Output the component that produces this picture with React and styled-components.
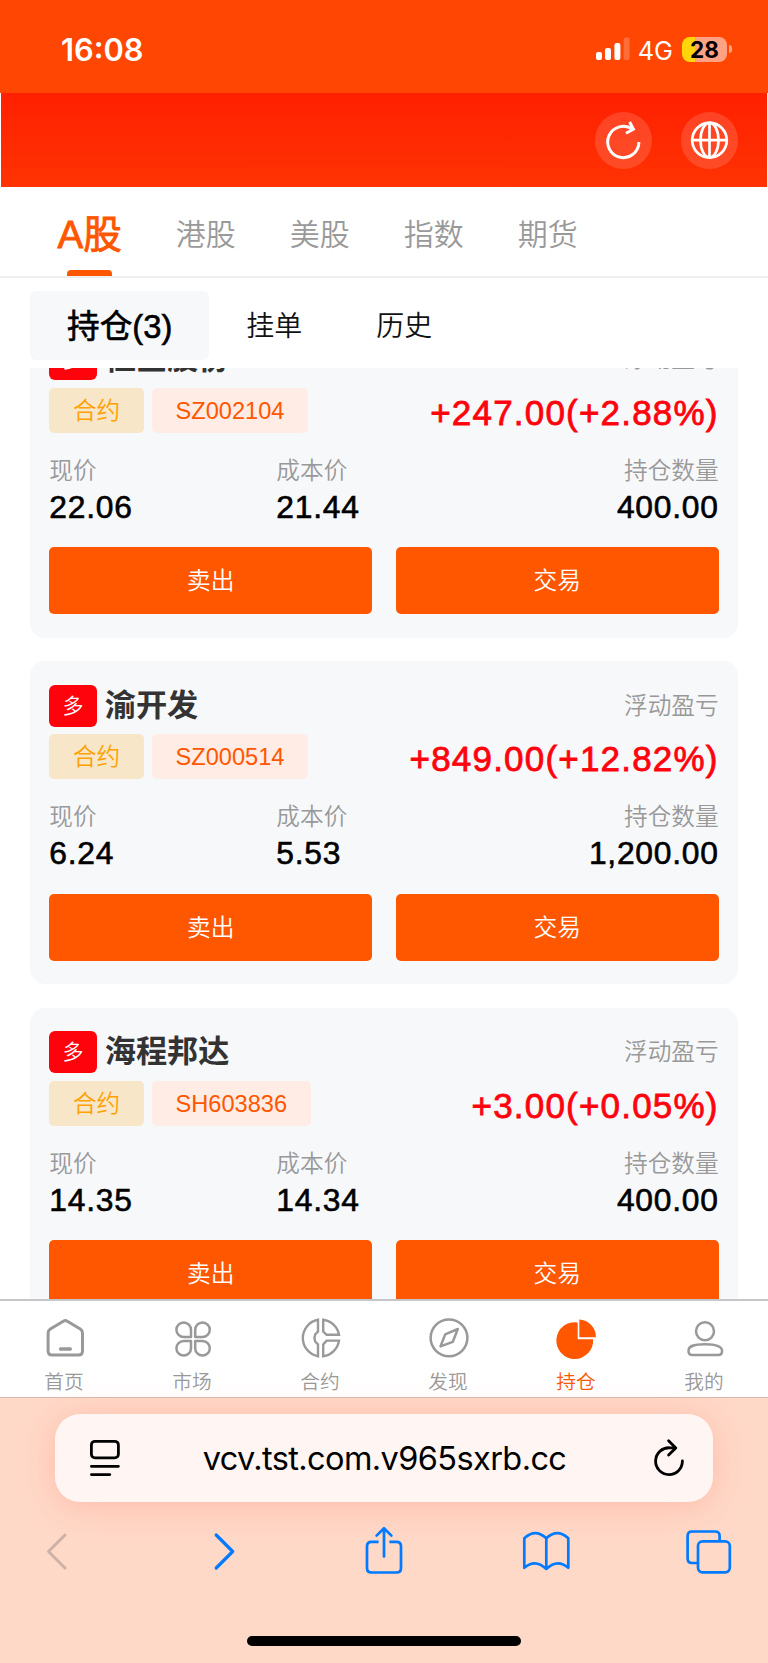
import React from "react";
import styled, { createGlobalStyle } from "styled-components";

const GlobalStyle = createGlobalStyle`
  * {
    box-sizing: border-box;
  }
  body {
    margin: 0;
    background: #fff;
    font-family: "Liberation Sans", "Noto Sans CJK SC", sans-serif;
    font-weight: 350;
  }
  svg {
    display: block;
    flex: none;
    overflow: visible;
  }
`;

const Screen = styled.div`
  width: 768px;
  height: 1663px;
  overflow: hidden;
  display: flex;
  flex-direction: column;
`;

const StatusBar = styled.div`
  flex: none;
  height: 93px;
  padding: 0 36px 0 61px;
  display: flex;
  align-items: center;
  justify-content: space-between;
  background: #ff4602;
  color: #fff;
  font-family: Inter, sans-serif;
`;

const Clock = styled.div`
  padding-top: 6px;
  font-size: 30.8px;
  line-height: 40px;
  font-weight: 600;
`;

const StatusRight = styled.div`
  display: flex;
  align-items: center;
  padding-top: 5px;
`;

const Network = styled.span`
  margin: 3px 9px 0 8px;
  font-size: 25.3px;
  line-height: 30px;
  font-weight: 400;
`;

const Battery = styled.div`
  width: 45px;
  height: 25px;
  border-radius: 8px;
  background: linear-gradient(90deg, #ffd60a 13px, #ffa284 13px);
  color: #000;
  font-size: 22.5px;
  line-height: 26px;
  font-weight: 700;
  text-align: center;
`;

const BatteryTip = styled.div`
  width: 3px;
  height: 8px;
  margin-left: 2px;
  border-radius: 0 4px 4px 0;
  background: #ffa284;
`;

const Header = styled.header`
  flex: none;
  height: 94px;
  margin: 0 1px;
  padding-right: 29px;
  display: flex;
  align-items: center;
  justify-content: flex-end;
  gap: 29px;
  background: linear-gradient(#ff2000, #ff3303);
`;

const RoundButton = styled.div`
  width: 57px;
  height: 57px;
  border-radius: 50%;
  background: rgba(255, 255, 255, 0.14);
`;

const MarketTabs = styled.div`
  flex: none;
  height: 91px;
  padding-left: 57.5px;
  display: flex;
  gap: 54px;
  border-bottom: 2px solid #eee;
`;

const MarketTab = styled.div`
  display: flex;
  flex-direction: column;
  align-items: center;
  height: 89px;
  line-height: ${(p) => (p.$active ? 96 : 95)}px;
  color: ${(p) => (p.$active ? "#ff5700" : "#999")};
  font-size: ${(p) => (p.$active ? 38.5 : 30)}px;
  font-weight: ${(p) => (p.$active ? 400 : 350)};
  ${(p) =>
    p.$active &&
    `
    -webkit-text-stroke: 0.9px #ff5700;
    &::after {
      content: "";
      flex: none;
      width: 45px;
      height: 6px;
      margin-top: -13px;
      border-radius: 4px 4px 0 0;
      background: #ff5700;
    }
  `}
`;

const SubTabs = styled.div`
  flex: none;
  height: 90px;
  padding: 13px 30px 0;
  display: flex;
`;

const SubTab = styled.div`
  height: 69px;
  padding: 0 37px;
  border-radius: 6px;
  line-height: 72px;
  font-size: ${(p) => (p.$active ? 32.7 : 28)}px;
  font-weight: ${(p) => (p.$active ? 400 : 350)};
  color: ${(p) => (p.$active ? "#000" : "#111")};
  background: ${(p) => (p.$active ? "#f7f8fa" : "transparent")};
  -webkit-text-stroke: ${(p) => (p.$active ? "0.6px #000" : "0")};
`;

const List = styled.div`
  flex: none;
  height: 931px;
  padding: 0 30px;
  overflow: hidden;
`;

/* scrolled part way down, so the first card starts above the list */
const Cards = styled.div`
  margin-top: -53px;
  display: flex;
  flex-direction: column;
  gap: 23.7px;
`;

const Card = styled.div`
  height: 322.6px;
  padding: 23.7px 19.3px;
  border-radius: 15px;
  background: #f7f8fa;
`;

const Row = styled.div`
  display: flex;
  align-items: center;
  justify-content: space-between;
  height: ${(p) => p.$h}px;
  margin-top: ${(p) => p.$top || 0}px;
`;

const Group = styled.div`
  display: flex;
  align-items: center;
  gap: 8px;
`;

const Side = styled.div`
  width: 47.4px;
  height: 41.6px;
  border-radius: 6px;
  background: #ff030d;
  color: #fff;
  font-size: 21px;
  line-height: 42px;
  text-align: center;
`;

const StockName = styled.div`
  font-size: 31.2px;
  line-height: 40px;
  font-weight: 600;
  color: #333;
`;

const Tag = styled.div`
  height: 45px;
  padding: 0 23.7px;
  border-radius: 5px;
  font-size: 23.6px;
  line-height: 47px;
  color: ${(p) => (p.$code ? "#ff5700" : "#ffa100")};
  background: ${(p) => (p.$code ? "#ffece5" : "#f7e6c8")};
`;

const Profit = styled.div`
  margin-top: 4px;
  font-size: 35px;
  letter-spacing: 1.2px;
  line-height: 45px;
  color: #ff030d;
  -webkit-text-stroke: 0.8px #ff030d;
`;

const Label = styled.div`
  padding-top: 1px;
  font-size: 23.7px;
  line-height: 33px;
  color: #999;
`;

const Figures = styled.div`
  display: grid;
  grid-template-columns: 227px 227px 1fr;
  margin-top: 21px;
`;

const Figure = styled.div`
  text-align: ${(p) => (p.$end ? "right" : "left")};
`;

const Value = styled.div`
  font-size: 31.8px;
  line-height: 38px;
  letter-spacing: 0.75px;
  color: #000;
  -webkit-text-stroke: 0.6px #000;
`;

const Actions = styled.div`
  display: grid;
  grid-template-columns: 1fr 1fr;
  gap: 23.4px;
  margin-top: 21.3px;
`;

const ActionButton = styled.div`
  height: 67px;
  border-radius: 5px;
  background: #ff5700;
  color: #fff;
  font-size: 23.7px;
  line-height: 69px;
  text-align: center;
`;

const NavBar = styled.nav`
  flex: none;
  height: 99px;
  display: grid;
  grid-template-columns: repeat(6, 1fr);
  border-top: 2px solid #c6c6c8;
  border-bottom: 1px solid #d8b9ae;
`;

const NavItem = styled.div`
  display: flex;
  flex-direction: column;
  align-items: center;
  padding-top: 16.5px;
  font-size: 19.7px;
  line-height: 26px;
  color: ${(p) => (p.$active ? "#ff5700" : "#999")};
  svg {
    margin: 0 0 11px 2px;
  }
`;

const Browser = styled.div`
  flex: 1;
  display: flex;
  flex-direction: column;
  align-items: center;
  padding: 16px 0 17px;
  background: #ffd9c8;
`;

const AddressBar = styled.div`
  width: 658px;
  height: 88px;
  flex: none;
  padding: 0 28px 0 33px;
  display: grid;
  grid-template-columns: 32px 1fr 32px;
  align-items: center;
  border-radius: 25px;
  background: #fff6f3;
  box-shadow: 0 4px 34px rgba(255, 120, 100, 0.3);
`;

const Url = styled.div`
  padding-right: 4px;
  font-family: Inter, sans-serif;
  font-size: 32.5px;
  letter-spacing: -0.6px;
  font-weight: 400;
  text-align: center;
  color: #000;
`;

const Toolbar = styled.div`
  width: 100%;
  height: 54px;
  margin-top: 22px;
  padding-left: 45px;
  display: grid;
  grid-template-columns: 167px 152px 158px 163px 46px;
  align-items: center;
  color: #007aff;
`;

const HomeIndicator = styled.div`
  width: 274px;
  height: 10px;
  margin-top: auto;
  border-radius: 5px;
  background: #000;
`;

const Signal = () => (
  <svg width="34" height="24" viewBox="0 0 34 24" fill="#fff">
    <rect x="0" y="15" width="6" height="8" rx="2" />
    <rect x="9" y="11" width="6" height="12" rx="2" />
    <rect x="18.4" y="6" width="6" height="17" rx="2" />
    <rect x="27.6" y="0.5" width="6" height="22.5" rx="2" opacity="0.22" />
  </svg>
);

const RefreshIcon = () => (
  <svg width="57" height="57" viewBox="0 0 57 57" fill="none" stroke="#fff" strokeWidth="3">
    <path d="M43.9 30A15.6 15.6 0 1 1 37.5 17.4" />
    <path d="M34.6 10L38.4 17.2L31 21.2" />
  </svg>
);

const GlobeIcon = () => (
  <svg width="57" height="57" viewBox="0 0 57 57" fill="none" stroke="#fff" strokeWidth="2.7">
    <circle cx="28.5" cy="28.2" r="17.3" />
    <ellipse cx="28.5" cy="28.2" rx="9" ry="17.3" />
    <path d="M28.5 11V45.5M11 28.2H46" />
  </svg>
);

const navIcon = {
  width: 40,
  height: 40,
  viewBox: "0 0 40 40",
  fill: "none",
  stroke: "currentColor",
  strokeWidth: 2.5,
  strokeLinejoin: "round",
};

const HomeIcon = () => (
  <svg {...navIcon}>
    <path strokeWidth="3" d="M18.3 3.2Q20.3 2 22.3 3.2L35.3 11Q37.5 12.4 37.5 15V33Q37.5 37 33.5 37H7.1Q3.1 37 3.1 33V15Q3.1 12.4 5.3 11Z" />
    <path strokeWidth="3.4" strokeLinecap="round" d="M15.5 31H25.3" />
  </svg>
);

const MarketIcon = () => (
  <svg {...navIcon}>
    <path d="M18 19H10.7A7.3 7.3 0 1 1 18 11.7Z" />
    <path d="M22.2 19H29.5A7.3 7.3 0 1 0 22.2 11.7Z" />
    <path d="M18 22.9H10.7A7.3 7.3 0 1 0 18 30.2Z" />
    <path d="M22.2 22.9H29.5A7.3 7.3 0 1 1 22.2 30.2Z" />
  </svg>
);

const ContractIcon = () => (
  <svg {...navIcon} strokeWidth="2.4" strokeLinejoin="miter">
    <path d="M17 1.8V13.6L14.2 16.4Q12.6 20 14.2 23.6L17 26.4V38.2A18.5 18.5 0 0 1 17 1.8Z" />
    <path d="M22.2 1.8V13.6L25.6 16.8H38A18.5 18.5 0 0 0 22.2 1.8Z" />
    <path d="M22.2 38.2V26.4L25.6 22.6H38A18.5 18.5 0 0 1 22.2 38.2Z" />
  </svg>
);

const DiscoverIcon = () => (
  <svg {...navIcon}>
    <circle cx="20" cy="19.8" r="18.4" />
    <path d="M28.8 11L16.2 16.4L11.5 28.4L23.8 23.8Z" />
  </svg>
);

const PositionIcon = () => (
  <svg {...navIcon} fill="currentColor" stroke="none">
    <path d="M20.7 4.4A18.4 18.4 0 1 0 36.1 21.2H20.7Z" />
    <path d="M22.3 1.6A17.4 17.4 0 0 1 38.9 19.2H22.3Z" />
  </svg>
);

const MineIcon = () => (
  <svg {...navIcon}>
    <circle cx="20" cy="13.2" r="9" />
    <path d="M3.5 33C3.5 28 8.3 26.2 20 26.2S37.1 28 37.1 33Q37.1 37 33.3 37H7.3Q3.5 37 3.5 33Z" />
  </svg>
);

const PageIcon = () => (
  <svg width="32" height="38" viewBox="0 0 32 38" fill="none" stroke="#000" strokeWidth="2.8" strokeLinecap="round">
    <rect x="3.4" y="2.3" width="27" height="16.6" rx="3.6" />
    <path d="M3.4 27.3H30.4M3.4 35.6H21.8" />
  </svg>
);

const ReloadIcon = () => (
  <svg width="32" height="38" viewBox="0 0 32 38" fill="none" stroke="#000" strokeWidth="2.8" strokeLinecap="round" strokeLinejoin="round">
    <path d="M29.4 22A13.4 13.4 0 1 1 17 8.8H22" />
    <path d="M15.6 1.8L22.8 8.9L15.6 16" />
  </svg>
);

const BackIcon = () => (
  <svg width="24" height="40" viewBox="0 0 24 40" fill="none" stroke="#cdb0a6" strokeWidth="3" strokeLinecap="round" strokeLinejoin="round">
    <path d="M20 4L3.5 20.5L20 37" />
  </svg>
);

const ForwardIcon = () => (
  <svg width="24" height="40" viewBox="0 0 24 40" fill="none" stroke="currentColor" strokeWidth="3.2" strokeLinecap="round" strokeLinejoin="round">
    <path d="M4.2 4L20.7 20.5L4.2 37" />
  </svg>
);

const ShareIcon = () => (
  <svg width="40" height="54" viewBox="0 0 40 54" fill="none" stroke="currentColor" strokeWidth="2.7" strokeLinejoin="round">
    <path d="M14.6 17.8H7.5Q3 17.8 3 22.2V44.2Q3 48.5 7.5 48.5H32.5Q37 48.5 37 44.2V22.2Q37 17.8 32.5 17.8H25.4" />
    <path strokeLinecap="round" d="M20 32.5V4.5M12.6 11.6L20 4.3L27.4 11.6" />
  </svg>
);

const BookIcon = () => (
  <svg width="48" height="42" viewBox="0 0 48 42" fill="none" stroke="currentColor" strokeWidth="2.7" strokeLinejoin="round">
    <path d="M24.3 8.2V39Q13.3 28.5 2.3 37.8V8.2Q13.3-2 24.3 8.2Q35.3-2 46.3 8.2V37.8Q35.3 28.5 24.3 39" />
  </svg>
);

const TabsIcon = () => (
  <svg width="46" height="44" viewBox="0 0 46 44" fill="none" stroke="currentColor" strokeWidth="2.7">
    <path d="M12.6 34H7.1Q2.6 34 2.6 29.5V7Q2.6 2.5 7.1 2.5H30.1Q34.6 2.5 34.6 7V12" />
    <rect x="13" y="12.3" width="31.8" height="31" rx="4.5" />
  </svg>
);

const positions = [
  { name: "恒宝股份", code: "SZ002104", profit: "+247.00(+2.88%)", price: "22.06", cost: "21.44", amount: "400.00" },
  { name: "渝开发", code: "SZ000514", profit: "+849.00(+12.82%)", price: "6.24", cost: "5.53", amount: "1,200.00" },
  { name: "海程邦达", code: "SH603836", profit: "+3.00(+0.05%)", price: "14.35", cost: "14.34", amount: "400.00" },
];

const navItems = [
  { label: "首页", Icon: HomeIcon },
  { label: "市场", Icon: MarketIcon },
  { label: "合约", Icon: ContractIcon },
  { label: "发现", Icon: DiscoverIcon },
  { label: "持仓", Icon: PositionIcon, active: true },
  { label: "我的", Icon: MineIcon },
];

const PositionCard = ({ item }) => (
  <Card>
    <Row $h={41.6}>
      <Group>
        <Side>多</Side>
        <StockName>{item.name}</StockName>
      </Group>
      <Label>浮动盈亏</Label>
    </Row>
    <Row $h={45} $top={7.7}>
      <Group>
        <Tag>合约</Tag>
        <Tag $code>{item.code}</Tag>
      </Group>
      <Profit>{item.profit}</Profit>
    </Row>
    <Figures>
      <Figure>
        <Label>现价</Label>
        <Value>{item.price}</Value>
      </Figure>
      <Figure>
        <Label>成本价</Label>
        <Value>{item.cost}</Value>
      </Figure>
      <Figure $end>
        <Label>持仓数量</Label>
        <Value>{item.amount}</Value>
      </Figure>
    </Figures>
    <Actions>
      <ActionButton>卖出</ActionButton>
      <ActionButton>交易</ActionButton>
    </Actions>
  </Card>
);

const App = () => {
  return (
    <Screen>
      <GlobalStyle />
      <StatusBar>
        <Clock>16:08</Clock>
        <StatusRight>
          <Signal />
          <Network>4G</Network>
          <Battery>28</Battery>
          <BatteryTip />
        </StatusRight>
      </StatusBar>
      <Header>
        <RoundButton><RefreshIcon /></RoundButton>
        <RoundButton><GlobeIcon /></RoundButton>
      </Header>
      <MarketTabs>
        <MarketTab $active>A股</MarketTab>
        <MarketTab>港股</MarketTab>
        <MarketTab>美股</MarketTab>
        <MarketTab>指数</MarketTab>
        <MarketTab>期货</MarketTab>
      </MarketTabs>
      <SubTabs>
        <SubTab $active>持仓(3)</SubTab>
        <SubTab>挂单</SubTab>
        <SubTab>历史</SubTab>
      </SubTabs>
      <List>
        <Cards>
          {positions.map((item) => (
            <PositionCard key={item.code} item={item} />
          ))}
        </Cards>
      </List>
      <NavBar>
        {navItems.map(({ label, Icon, active }) => (
          <NavItem key={label} $active={active}>
            <Icon />
            {label}
          </NavItem>
        ))}
      </NavBar>
      <Browser>
        <AddressBar>
          <PageIcon />
          <Url>vcv.tst.com.v965sxrb.cc</Url>
          <ReloadIcon />
        </AddressBar>
        <Toolbar>
          <BackIcon />
          <ForwardIcon />
          <ShareIcon />
          <BookIcon />
          <TabsIcon />
        </Toolbar>
        <HomeIndicator />
      </Browser>
    </Screen>
  );
};

export default App;
